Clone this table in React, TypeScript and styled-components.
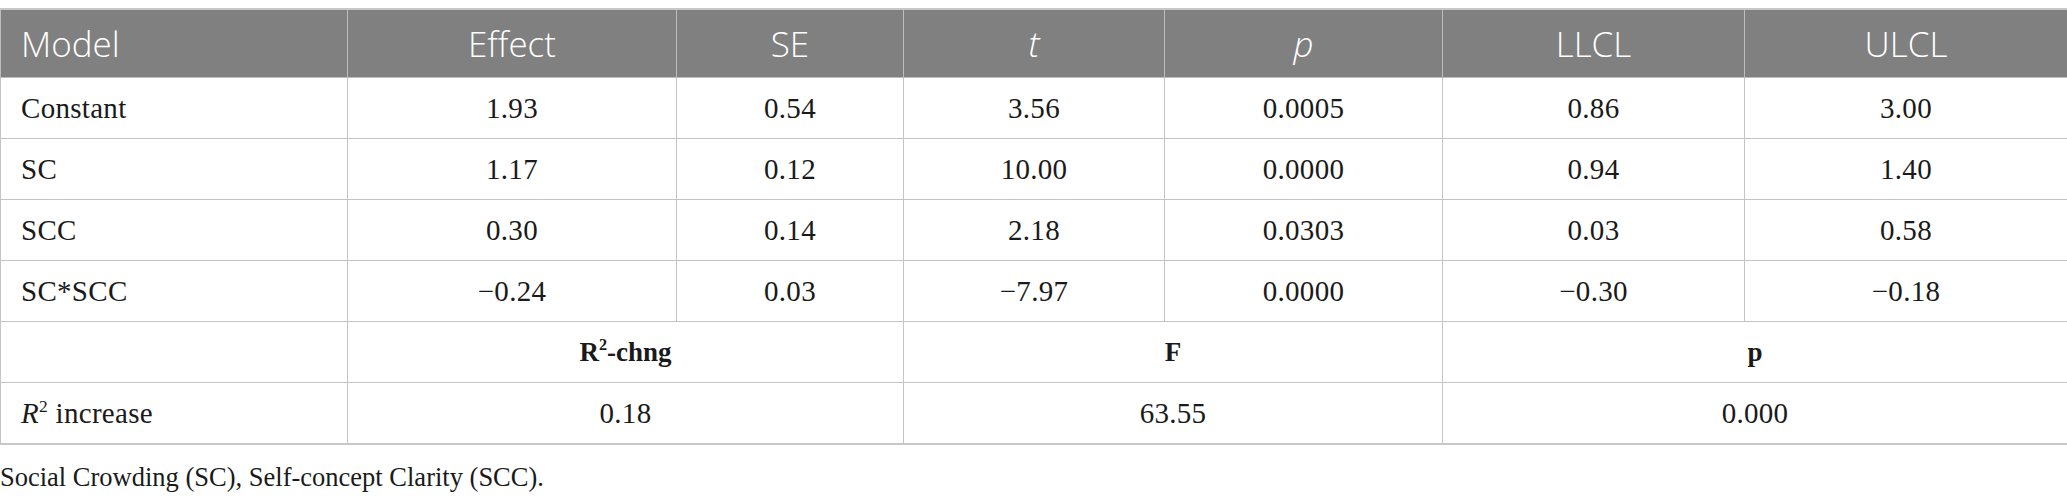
import React from "react";
import styled, { createGlobalStyle } from "styled-components";

const Global = createGlobalStyle`
  html, body { margin: 0; padding: 0; background: #ffffff; }
`;

const Page = styled.div`
  padding-top: 8px;
  width: 2067px;
`;

const Table = styled.table`
  width: 2067px;
  border-collapse: collapse;
  table-layout: fixed;
  border-top: 2px solid #c8c8c8;
  border-bottom: 2px solid #c8c8c8;
`;

const HeadCell = styled.th<{ $align?: string }>`
  height: 67px;
  padding: 0 20px;
  background: #808080;
  color: #ffffff;
  font-family: "Open Sans", "Noto Sans", sans-serif;
  font-weight: 300;
  font-size: 35px;
  text-align: ${(p) => p.$align || "center"};
  border: 1px solid #bdbdbd;
  border-top: none;
`;

const Em = styled.span`
  font-style: italic;
`;

const Cell = styled.td<{ $align?: string; $bold?: boolean }>`
  height: 60px;
  padding: 0 20px;
  font-family: "Liberation Serif", "Times New Roman", serif;
  font-size: ${(p) => (p.$bold ? 27 : 29)}px;
  letter-spacing: ${(p) => (p.$bold ? 0 : 0.3)}px;
  color: #1a1a1a;
  font-weight: ${(p) => (p.$bold ? 700 : 400)};
  text-align: ${(p) => p.$align || "center"};
  border: 1px solid #c4c4c4;
  vertical-align: middle;
`;

const Sup = styled.sup`
  font-size: 0.6em;
  line-height: 0;
  vertical-align: 0.65em;
`;

const Note = styled.p`
  margin: 17px 0 0 0;
  font-family: "Liberation Serif", "Times New Roman", serif;
  font-size: 26.5px;
  color: #1a1a1a;
`;

const widths = [347, 329, 227, 261, 278, 302, 323];

const rows: string[][] = [
  ["Constant", "1.93", "0.54", "3.56", "0.0005", "0.86", "3.00"],
  ["SC", "1.17", "0.12", "10.00", "0.0000", "0.94", "1.40"],
  ["SCC", "0.30", "0.14", "2.18", "0.0303", "0.03", "0.58"],
  ["SC*SCC", "\u22120.24", "0.03", "\u22127.97", "0.0000", "\u22120.30", "\u22120.18"],
];

export default function App() {
  return (
    <Page>
      <Global />
      <Table>
        <colgroup>
          {widths.map((w, i) => (
            <col key={i} style={{ width: w }} />
          ))}
        </colgroup>
        <thead>
          <tr>
            <HeadCell $align="left">Model</HeadCell>
            <HeadCell>Effect</HeadCell>
            <HeadCell>SE</HeadCell>
            <HeadCell>
              <Em>t</Em>
            </HeadCell>
            <HeadCell>
              <Em>p</Em>
            </HeadCell>
            <HeadCell>LLCL</HeadCell>
            <HeadCell>ULCL</HeadCell>
          </tr>
        </thead>
        <tbody>
          {rows.map((r, i) => (
            <tr key={i}>
              {r.map((c, j) => (
                <Cell key={j} $align={j === 0 ? "left" : "center"}>
                  {c}
                </Cell>
              ))}
            </tr>
          ))}
          <tr>
            <Cell $align="left"></Cell>
            <Cell colSpan={2} $bold>
              R<Sup>2</Sup>-chng
            </Cell>
            <Cell colSpan={2} $bold>
              F
            </Cell>
            <Cell colSpan={2} $bold>
              p
            </Cell>
          </tr>
          <tr>
            <Cell $align="left">
              <Em>R</Em>
              <Sup>2</Sup> increase
            </Cell>
            <Cell colSpan={2}>0.18</Cell>
            <Cell colSpan={2}>63.55</Cell>
            <Cell colSpan={2}>0.000</Cell>
          </tr>
        </tbody>
      </Table>
      <Note>Social Crowding (SC), Self-concept Clarity (SCC).</Note>
    </Page>
  );
}
